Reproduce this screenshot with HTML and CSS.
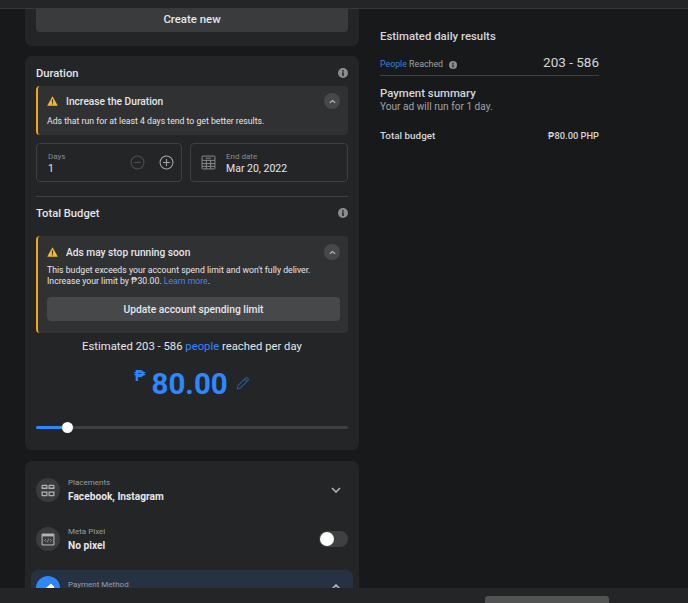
FILE: index.html
```html
<!DOCTYPE html>
<html lang="en">
<head>
<meta charset="utf-8">
<title>Boost ad</title>
<link rel="stylesheet" href="styles.css">
</head>
<body>
<div class="topbar"></div>
<main class="main">
  <section class="left">
    <div class="card card-first">
      <button class="btn btn-create">Create new</button>
    </div>
    <div class="card card-budget">
      <div class="heading heading-duration">
        <span>Duration</span>
        <svg class="info" viewBox="0 0 10 10"><circle cx="5" cy="5" r="5" fill="#8a8d91"/><rect x="4.2" y="4.3" width="1.6" height="3.6" fill="#242526"/><rect x="4.2" y="2.1" width="1.6" height="1.5" fill="#242526"/></svg>
      </div>
      <div class="alert alert-short">
        <div class="alert-head">
          <svg class="warn" viewBox="0 0 12 11"><path d="M6 .4 11.8 10.6H.2Z" fill="#f7b928"/><rect x="5.4" y="3.6" width="1.2" height="3.9" fill="#303133"/><rect x="5.4" y="8.1" width="1.2" height="1.2" fill="#303133"/></svg>
          <span class="alert-title">Increase the Duration</span>
          <span class="collapse"><svg viewBox="0 0 8 5"><path d="M1 4 4 1.4 7 4" fill="none" stroke="#b0b3b8" stroke-width="1.4"/></svg></span>
        </div>
        <p class="alert-text alert-text-short">Ads that run for at least 4 days tend to get better results.</p>
      </div>
      <div class="fields">
        <div class="field field-days">
          <div class="field-label">
            <span class="label">Days</span>
            <span class="value">1</span>
          </div>
          <svg class="round" viewBox="0 0 14 14"><circle cx="7" cy="7" r="6" fill="none" stroke="#4d4f52" stroke-width="1"/><path d="M4 7h6" stroke="#4d4f52"/></svg>
          <svg class="round" viewBox="0 0 14 14"><circle cx="7" cy="7" r="6" fill="none" stroke="#a0a3a8" stroke-width="1"/><path d="M3.8 7h6.4M7 3.8v6.4" stroke="#a0a3a8"/></svg>
        </div>
        <div class="field field-date">
          <svg class="cal" viewBox="0 0 14 14"><path d="M1.5 1h11a.5.5 0 0 1 .5.5v11a.5.5 0 0 1-.5.5h-11a.5.5 0 0 1-.5-.5v-11a.5.5 0 0 1 .5-.5ZM1 5h12M1 8h12M1 10.6h12M5 5v8M9 5v8M4.5 3h5" fill="none" stroke="#8a8d91" stroke-width=".9"/></svg>
          <div class="field-label">
            <span class="label">End date</span>
            <span class="value">Mar 20, 2022</span>
          </div>
        </div>
      </div>
      <hr class="rule">
      <div class="heading heading-budget">
        <span>Total Budget</span>
        <svg class="info" viewBox="0 0 10 10"><circle cx="5" cy="5" r="5" fill="#8a8d91"/><rect x="4.2" y="4.3" width="1.6" height="3.6" fill="#242526"/><rect x="4.2" y="2.1" width="1.6" height="1.5" fill="#242526"/></svg>
      </div>
      <div class="alert alert-tall">
        <div class="alert-head">
          <svg class="warn" viewBox="0 0 12 11"><path d="M6 .4 11.8 10.6H.2Z" fill="#f7b928"/><rect x="5.4" y="3.6" width="1.2" height="3.9" fill="#303133"/><rect x="5.4" y="8.1" width="1.2" height="1.2" fill="#303133"/></svg>
          <span class="alert-title">Ads may stop running soon</span>
          <span class="collapse"><svg viewBox="0 0 8 5"><path d="M1 4 4 1.4 7 4" fill="none" stroke="#b0b3b8" stroke-width="1.4"/></svg></span>
        </div>
        <p class="alert-text">This budget exceeds your account spend limit and won't fully deliver.<br>Increase your limit by ₱30.00. <a class="link" href="#">Learn more</a>.</p>
        <button class="btn btn-update">Update account spending limit</button>
      </div>
      <p class="estimate">Estimated 203 - 586 <span class="blue">people</span> reached per day</p>
      <div class="price">
        <span class="peso">₱</span>
        <span class="amount">80.00</span>
        <svg class="pencil" viewBox="0 0 14 14"><path d="M1.2 12.8 2 9.6 9.8 1.8a1 1 0 0 1 1.4 0l1 1a1 1 0 0 1 0 1.4L4.4 12ZM8.6 3l2.4 2.4" fill="none" stroke="#275a9e" stroke-width="1.1"/></svg>
      </div>
      <div class="slider"><span class="slider-fill"></span><span class="slider-thumb"></span></div>
    </div>
    <div class="card card-options">
      <div class="option option-place">
        <span class="opt-icon"><svg viewBox="0 0 14 12"><path d="M.5 1.3a1 1 0 0 1 1-1h4a1 1 0 0 1 1 1v3.2h-6ZM7.5 1.3a1 1 0 0 1 1-1h4a1 1 0 0 1 1 1v3.2h-6ZM.5 7h6v3.7a1 1 0 0 1-1 1h-4a1 1 0 0 1-1-1ZM7.5 7h6v3.7a1 1 0 0 1-1 1h-4a1 1 0 0 1-1-1Z" fill="#b0b3b8"/><path d="M1.7 1.5h3.6v1.5H1.7ZM8.7 1.5h3.6v1.5H8.7ZM1.7 8.2h3.6v2.2H1.7ZM8.7 8.2h3.6v2.2H8.7Z" fill="#3a3b3c"/></svg></span>
        <div class="opt-text"><span class="opt-label">Placements</span><span class="opt-value">Facebook, Instagram</span></div>
        <svg class="chev" viewBox="0 0 10 6"><path d="M1 1 5 5 9 1" fill="none" stroke="#b0b3b8" stroke-width="1.6"/></svg>
      </div>
      <div class="option option-pixel">
        <span class="opt-icon"><svg viewBox="0 0 14 13"><rect x=".5" y=".5" width="13" height="12" rx="1.2" fill="#b0b3b8"/><rect x="1.6" y="3.4" width="10.8" height="8" fill="#3a3b3c"/><path d="M5 6 3.6 7.4 5 8.8M9 6l1.4 1.4L9 8.8M7.6 5.6 6.4 9.2" fill="none" stroke="#b0b3b8" stroke-width=".7"/></svg></span>
        <div class="opt-text"><span class="opt-label">Meta Pixel</span><span class="opt-value">No pixel</span></div>
        <span class="toggle"><span class="toggle-thumb"></span></span>
      </div>
      <div class="option option-pay">
        <span class="opt-icon opt-icon-blue"><svg viewBox="0 0 24 24"><path d="M6 16 15 8l3 3-9 8ZM12 20l8-7" fill="#fff" stroke="#fff"/></svg></span>
        <div class="opt-text"><span class="opt-label opt-label-pay">Payment Method</span></div>
        <svg class="chev" viewBox="0 0 10 6"><path d="M1 5 5 1 9 5" fill="none" stroke="#b0b3b8" stroke-width="1.6"/></svg>
      </div>
    </div>
  </section>
  <aside class="right">
    <h2 class="side-title">Estimated daily results</h2>
    <div class="reach">
      <span class="reach-label"><span class="people">People</span> Reached</span>
      <svg class="info-small" viewBox="0 0 10 10"><circle cx="5" cy="5" r="5" fill="#8a8d91"/><rect x="4.2" y="4.3" width="1.6" height="3.6" fill="#18191a"/><rect x="4.2" y="2.1" width="1.6" height="1.5" fill="#18191a"/></svg>
      <span class="reach-value">203 - 586</span>
    </div>
    <h2 class="side-title side-summary">Payment summary</h2>
    <p class="side-note">Your ad will run for 1 day.</p>
    <div class="total">
      <span class="total-label">Total budget</span>
      <span class="total-value">₱80.00 PHP</span>
    </div>
  </aside>
</main>
<footer class="bottombar"><span class="bottom-btn"></span></footer>
</body>
</html>
```

FILE: styles.css
```css
* { box-sizing: border-box; }
html, body { margin: 0; height: 100%; }
body {
  display: flex;
  flex-direction: column;
  height: 603px;
  overflow: hidden;
  background: #18191a;
  color: #e4e6eb;
  font-family: Roboto, "Liberation Sans", sans-serif;
}
.topbar {
  flex: none;
  height: 9px;
  background: #242526;
  border-bottom: 1px solid #38393b;
}
.main {
  flex: 1;
  min-height: 0;
  overflow: hidden;
  display: flex;
  padding-left: 25px;
}
.left { flex: none; width: 334px; display: flex; flex-direction: column; }
.card { flex: none; background: #242526; border-radius: 7px; padding: 0 11px; }
.card-first { border-radius: 0 0 7px 7px; padding-bottom: 14px; height: 37px; }
.btn {
  display: block;
  width: 100%;
  border: 0;
  border-radius: 4px;
  background: #3a3b3c;
  color: #e4e6eb;
  font: 500 11.4px Roboto, sans-serif;
}
.btn-create { height: 23px; border-radius: 0 0 4px 4px; padding: 0 0 4px; }
.card-budget { margin-top: 10px; height: 394px; padding-top: 8px; }
.heading {
  display: flex;
  justify-content: space-between;
  align-items: center;
  height: 18px;
  font-size: 11.2px;
  font-weight: 500;
}
.info { width: 10px; height: 10px; }
.alert {
  margin-top: 4px;
  background: #303133;
  border-left: 2px solid #f0a818;
  border-radius: 4px;
  padding: 7px 8px 0 9px;
}
.alert-short { height: 49px; }
.alert-tall { height: 97px; margin-top: 14px; padding-top: 8px; }
.alert-head { display: flex; align-items: center; height: 16px; }
.warn { width: 11px; height: 10px; flex: none; }
.alert-title { margin-left: 8px; flex: 1; font-size: 10.2px; font-weight: 500; }
.collapse {
  width: 16px;
  height: 16px;
  border-radius: 50%;
  background: #47484a;
  display: flex;
  align-items: center;
  justify-content: center;
}
.collapse svg { width: 7px; height: 5px; }
.alert-text { margin: 5px 0 0; font-size: 8.7px; line-height: 11px; }
.alert-text-short { margin-top: 7px; }
.link, .blue { color: #2d88ff; text-decoration: none; }
.link { color: #4585e6; }
.btn-update {
  height: 24px;
  margin-top: 10px;
  padding: 1px 0 0;
  background: #47484a;
  font-size: 10.3px;
}
.fields { display: flex; gap: 8px; margin-top: 8px; }
.field {
  height: 39px;
  border: 1px solid #3e4042;
  border-radius: 4px;
  display: flex;
  align-items: center;
}
.field-days { width: 146px; padding: 0 7px 0 11px; gap: 14px; }
.field-date { width: 158px; padding-left: 10px; gap: 10px; }
.field-label { display: flex; flex-direction: column; flex: 1; padding-top: 2px; }
.label { font-size: 8px; line-height: 10px; color: #8a8d91; }
.value { font-size: 10.5px; line-height: 14px; }
.round { width: 15px; height: 15px; flex: none; }
.cal { width: 15px; height: 15px; flex: none; }
.rule { margin: 14px 0 0; border: 0; border-top: 1px solid #3e4042; }
.heading-budget { margin-top: 7px; }
.estimate { margin: 7px 0 0; text-align: center; font-size: 11.3px; line-height: 14px; }
.price {
  display: flex;
  justify-content: center;
  align-items: flex-start;
  height: 34px;
  margin-top: 13px;
  color: #2d88ff;
}
.peso { font-size: 15px; font-weight: 700; line-height: 16px; margin-right: 6px; margin-top: 1px; }
.amount { font-size: 29.5px; font-weight: 700; line-height: 34px; }
.pencil { width: 14px; height: 14px; margin: 9px 0 0 8px; }
.slider { position: relative; height: 3px; margin-top: 25px; background: #3e4042; border-radius: 2px; }
.slider-fill { display: block; width: 28px; height: 3px; background: #2d88ff; border-radius: 2px; }
.slider-thumb {
  position: absolute;
  left: 26px;
  top: -4px;
  width: 11px;
  height: 11px;
  border-radius: 50%;
  background: #fff;
}
.card-options { margin-top: 11px; padding: 17px 6px 0; height: 140px; }
.option { display: flex; align-items: center; padding: 0 5px; height: 24px; }
.option-pixel { margin-top: 25px; }
.option-pay {
  margin-top: 19px;
  height: 40px;
  background: #263141;
  border-radius: 6px 6px 0 0;
  align-items: flex-start;
  padding-top: 6px;
}
.opt-icon {
  flex: none;
  width: 24px;
  height: 24px;
  border-radius: 50%;
  background: #3a3b3c;
  display: flex;
  align-items: center;
  justify-content: center;
}
.opt-icon svg { width: 14px; height: 13px; }
.opt-icon-blue { background: #2d88ff; }
.opt-icon-blue svg { width: 24px; height: 24px; }
.opt-text { flex: 1; display: flex; flex-direction: column; margin-left: 8px; }
.opt-label { font-size: 8px; line-height: 11px; color: #9a9da2; }
.opt-label-pay { margin-top: 3px; }
.opt-value { font-size: 10.2px; line-height: 14px; font-weight: 700; margin-top: 2px; }
.chev { width: 10px; height: 6px; margin-right: 7px; }
.option-pay .chev { margin-top: 8px; }
.toggle { width: 29px; height: 16px; border-radius: 8px; background: #3e4042; position: relative; }
.toggle-thumb {
  position: absolute;
  left: 1px;
  top: 1px;
  width: 14px;
  height: 14px;
  border-radius: 50%;
  background: #fff;
}
.right { width: 219px; margin-left: 21px; padding-top: 20px; }
.side-title { margin: 0; font-size: 11.4px; line-height: 14px; font-weight: 500; color: #d4d6da; }
.reach {
  display: flex;
  align-items: center;
  height: 27px;
  margin-top: 6px;
  border-bottom: 1px solid #3e4042;
}
.reach-label { font-size: 8.8px; color: #a0a3a8; margin-top: 4px; }
.people { color: #3f7fd0; }
.info-small { width: 8px; height: 8px; margin: 5px 0 0 6px; }
.reach-value { margin-left: auto; font-size: 13.5px; color: #d4d6da; }
.side-summary { margin-top: 10px; }
.side-note { margin: 1px 0 0; font-size: 10.1px; line-height: 12px; color: #a0a3a8; }
.total { display: flex; justify-content: space-between; margin-top: 17px; font-size: 9.9px; line-height: 12px; font-weight: 500; color: #d4d6da; }
.total-value { font-size: 9.3px; }
.bottombar { flex: none; height: 15px; background: #242526; padding-top: 8px; overflow: hidden; display: flex; padding-left: 485px; }
.bottom-btn { width: 124px; height: 20px; flex: none; background: #505351; border-radius: 3px 3px 0 0; }
```
